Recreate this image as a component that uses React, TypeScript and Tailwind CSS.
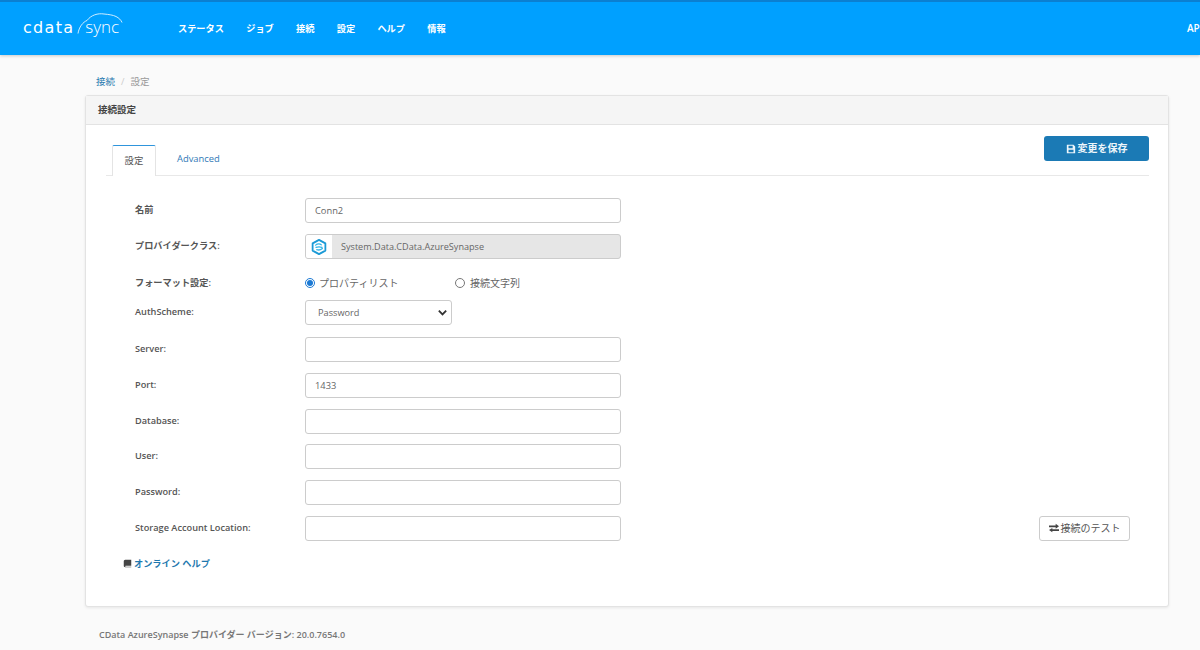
import React from 'react';

const font = "font-['Open_Sans','Noto_Sans_CJK_JP',sans-serif]";

const navItems = ['ステータス', 'ジョブ', '接続', '設定', 'ヘルプ', '情報'];

const labelClass = 'w-[170px] shrink-0 pb-[1px] text-[9.2px] font-semibold text-[#555]';

const Field: React.FC<{ label: string; value?: string; right?: React.ReactNode }> = ({ label, value = '', right }) => (
  <div className="flex h-[25px] items-center">
    <label className={labelClass}>{label}</label>
    <input
      readOnly
      value={value}
      className="h-[25px] w-[316px] rounded-[3px] border border-[#ccc] bg-white px-[9px] text-[9.3px] text-[#666] outline-none"
    />
    {right}
  </div>
);

const SynapseIcon = () => (
  <svg viewBox="0 0 24 24" className="h-[18px] w-[18px]" fill="none">
    <path d="M12 2.500 20.500 7.200v9.600L12 21.500 3.500 16.800V7.200Z" stroke="#1b9ad6" strokeWidth="2.400" strokeLinejoin="round" />
    <path d="M7.500 9.500c2.500-2 6-1.800 7.500-.5M8 12.500c2.500-1 5.500-1 8 0M9 15.500c2 .8 5 .6 7.500-1.500" stroke="#33b6e8" strokeWidth="1.700" strokeLinecap="round" />
  </svg>
);

const SaveIcon = () => (
  <svg viewBox="0 0 12 12" className="h-[10px] w-[10px]" fill="currentColor">
    <path fillRule="evenodd" d="M1 1h8l2 2v8H1ZM3 2v3h5V2ZM3 7v3h6V7Z" />
  </svg>
);

const TransferIcon = () => (
  <svg viewBox="0 0 12 12" className="h-[10px] w-[10px]" fill="#444">
    <path d="M0 3h8V1l4 3-4 3V5H0ZM12 7.500H4v-1.500L0 8.500 4 11V9.500h8Z" />
  </svg>
);

const BookIcon = () => (
  <svg viewBox="0 0 12 12" className="h-[9px] w-[9px]" fill="#444">
    <path d="M3 1h8v8H3.500c-.8 0-.8 1.200 0 1.200H11V11H3C1.500 11 1 10 1 9V3c0-1 .8-2 2-2Z" />
  </svg>
);

const Logo = () => (
  <div className="relative flex h-[36px] w-[100px] items-baseline pt-[7px] text-white">
    <span className="font-['DejaVu_Sans',sans-serif] text-[16px] leading-none tracking-[1.300px]">cdata</span>
    <span className="ml-[11px] font-['Open_Sans',sans-serif] text-[17px] font-light leading-none">sync</span>
    <svg viewBox="0 0 50 28" className="absolute left-[54px] top-[2px] h-[28px] w-[50px]" fill="none" stroke="#e4f5ff" strokeWidth="0.9">
      <path d="M1 20.500C2 14 6 9 10 7.500C14 2 21 0 27 1C32 1.500 36 2 39 3.500C42 5 44 7 45 9.500" />
    </svg>
  </div>
);

export default function App() {
  return (
    <div className={`${font} flex h-[650px] flex-col overflow-hidden bg-[#fafafa]`}>
      <header className="flex h-[55px] shrink-0 items-center overflow-hidden border-t-2 border-[#0b7fd1] bg-[#00a0ff] pl-[23px] shadow-[0_1px_3px_rgba(0,0,0,0.2)]">
        <Logo />
        <nav className="ml-[55px] flex gap-[22.300px] text-[9.200px] font-semibold text-white">
          {navItems.map((item) => (
            <span key={item}>{item}</span>
          ))}
        </nav>
        <span className="ml-auto w-[13px] shrink-0 text-[10px] font-semibold text-white">API</span>
      </header>

      <main className="ml-[85px] w-[1084px]">
        <div className="flex h-[40px] items-end gap-[6px] pb-[6px] pl-[11px] text-[9.500px] leading-[14px]">
          <span className="text-[#2a7ab0]">接続</span>
          <span className="text-[#ccc]">/</span>
          <span className="text-[#999]">設定</span>
        </div>

        <section className="h-[512px] rounded-[3px] border border-[#e3e3e3] bg-white shadow-[0_1px_3px_rgba(0,0,0,0.08)]">
          <div className="flex h-[29px] items-center border-b border-[#e3e3e3] bg-[#f5f5f5] pl-[12px] text-[9.500px] font-semibold text-[#444]">
            接続設定
          </div>

          <div className="pl-[20px] pr-[19px]">
            <div className="flex h-[51px] items-end justify-between border-b border-[#e8e8e8]">
              <div className="flex items-end pl-[6px] text-[9.400px]">
                <div className="-mb-px flex h-[31px] w-[44px] items-center justify-center rounded-t-[2px] border-x border-t border-x-[#e4e4e4] border-t-[#2f95dc] bg-white text-[#555]">
                  設定
                </div>
                <div className="ml-[21px] flex h-[31px] items-center text-[#337ab7]">Advanced</div>
              </div>
              <button className="mb-[14px] flex h-[25px] w-[105px] items-center justify-center gap-[2px] rounded-[3px] bg-[#1b7ab5] text-[10px] font-semibold text-[#eef6fb]">
                <SaveIcon />
                変更を保存
              </button>
            </div>

            <form className="flex flex-col pl-[29px] pt-[22px]">
              <Field label="名前" value="Conn2" />

              <div className="mt-[11px] flex h-[25px] items-center">
                <label className={labelClass}>プロバイダークラス:</label>
                <div className="flex h-[25px] w-[316px] overflow-hidden rounded-[3px] border border-[#ccc] bg-[#e6e6e6] text-[9.100px] text-[#666]">
                  <div className="flex w-[26px] items-center justify-center bg-white">
                    <SynapseIcon />
                  </div>
                  <div className="flex items-center pl-[9px]">System.Data.CData.AzureSynapse</div>
                </div>
              </div>

              <div className="mt-[14px] flex h-[20px] items-center">
                <label className={labelClass}>フォーマット設定:</label>
                <div className="flex items-center text-[10px] text-[#666]">
                  <span className="flex h-[10px] w-[10px] items-center justify-center rounded-full border border-[#1b7ad5]">
                    <span className="h-[6px] w-[6px] rounded-full bg-[#1b7ad5]" />
                  </span>
                  <span className="ml-[4px] w-[136px]">プロパティリスト</span>
                  <span className="h-[10px] w-[10px] rounded-full border border-[#777]" />
                  <span className="ml-[5px]">接続文字列</span>
                </div>
              </div>

              <div className="mt-[7px] flex h-[25px] items-center">
                <label className={labelClass}>AuthScheme:</label>
                <div className="flex h-[25px] w-[147px] items-center justify-between rounded-[3px] border border-[#ccc] bg-white pl-[12px] pr-[3px] text-[9.200px] text-[#666]">
                  Password
                  <svg viewBox="0 0 12 12" className="h-[11px] w-[11px]" fill="none" stroke="#333" strokeWidth="2">
                    <path d="M2 4l4 4 4-4" />
                  </svg>
                </div>
              </div>

              <div className="mt-[12px] flex flex-col gap-[10.800px]">
                <Field label="Server:" />
                <Field label="Port:" value="1433" />
                <Field label="Database:" />
                <Field label="User:" />
                <Field label="Password:" />
                <Field
                  label="Storage Account Location:"
                  right={
                    <button className="ml-auto mr-[19px] flex h-[25px] w-[91px] items-center justify-center gap-[2px] rounded-[3px] border border-[#ccc] bg-white text-[10px] text-[#555]">
                      <TransferIcon />
                      接続のテスト
                    </button>
                  }
                />
              </div>

              <a className="-ml-[12px] mt-[16px] flex items-center gap-[2px] text-[9.200px] font-semibold text-[#1f78ae]">
                <BookIcon />
                オンライン ヘルプ
              </a>
            </form>
          </div>
        </section>
      </main>

      <footer className="ml-[99px] mt-[21px] text-[9px] font-semibold text-[#777]">
        CData AzureSynapse プロバイダー バージョン: 20.0.7654.0
      </footer>
    </div>
  );
}
